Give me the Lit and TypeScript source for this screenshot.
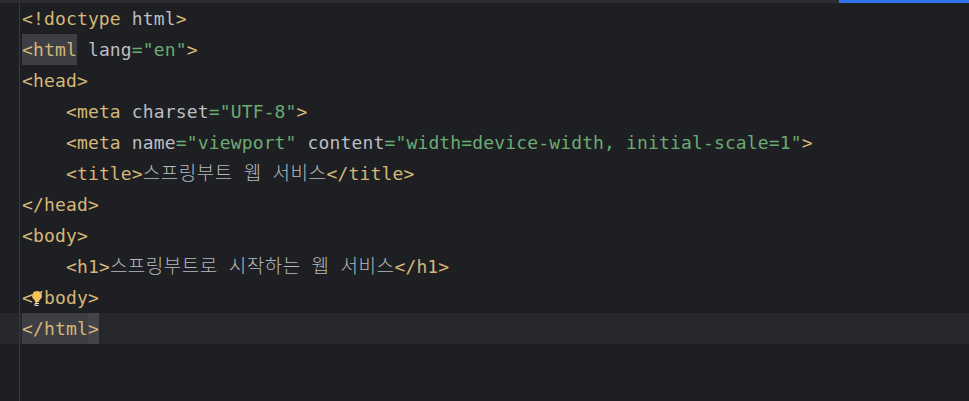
import { LitElement, html, css } from "lit";
import { customElement } from "lit/decorators.js";

@customElement("app-root")
export class AppRoot extends LitElement {
  static styles = css`
    :host { display: block; width: 969px; height: 401px; background: #1e1f22; overflow: hidden; font-family: "DejaVu Sans Mono", "Noto Sans CJK KR", monospace; font-size: 18px; letter-spacing: 0.145px; color: #bcbec4; }
    .top { height: 3px; display: flex; background: #2b2d30; }
    .top .fill { flex: 1; }
    .top .blue { width: 130px; background: #3574f0; }
    .editor { display: flex; height: 398px; position: relative; }
    .gutter { width: 19px; border-right: 1px solid #393b40; margin-right: 2px; flex: none; }
    .code { flex: 1; }
    .line { height: 31px; line-height: 31px; white-space: pre; position: relative; }
    .t { color: #d5b778; }
    .s { color: #6aab73; }
    .k { color: #b6b8be; font-size: 19px; font-weight: 300; letter-spacing: 0.5px; word-spacing: -1px; }
    .hl { background: #3d3f44; display: inline-block; height: 31px; vertical-align: top; }
    .hl2 { background: #43454a; display: inline-block; height: 31px; vertical-align: top; }
    .wrap { position: relative; }
    .caret { position: absolute; top: 310px; left: 0; right: 0; height: 31px; background: #26282e; }
    .bulb { position: absolute; left: 9px; top: 8px; width: 12px; height: 17px; }
  `;
  render() {
    return html`
      <div class="top"><div class="fill"></div><div class="blue"></div></div>
      <div class="wrap">
        <div class="caret"></div>
        <div class="editor">
          <div class="gutter"></div>
          <div class="code">
            <div class="line"><span class="t">&lt;!doctype</span> html<span class="t">&gt;</span></div>
            <div class="line"><span class="hl"><span class="t">&lt;html</span></span> lang<span class="s">="en"</span><span class="t">&gt;</span></div>
            <div class="line"><span class="t">&lt;head&gt;</span></div>
            <div class="line">    <span class="t">&lt;meta</span> charset<span class="s">="UTF-8"</span><span class="t">&gt;</span></div>
            <div class="line">    <span class="t">&lt;meta</span> name<span class="s">="viewport"</span> content<span class="s">="width=device-width, initial-scale=1"</span><span class="t">&gt;</span></div>
            <div class="line">    <span class="t">&lt;title&gt;</span><span class="k">스프링부트 웹 서비스</span><span class="t">&lt;/title&gt;</span></div>
            <div class="line"><span class="t">&lt;/head&gt;</span></div>
            <div class="line"><span class="t">&lt;body&gt;</span></div>
            <div class="line">    <span class="t">&lt;h1&gt;</span><span class="k">스프링부트로 시작하는 웹 서비스</span><span class="t">&lt;/h1&gt;</span></div>
            <div class="line"><span class="t">&lt;/body&gt;</span><svg class="bulb" viewBox="0 0 12 17" aria-hidden="true"><path d="M6 1a4.8 4.8 0 0 0-3 8.6c.7.6.9 1.4.9 2.4h4.2c0-1 .2-1.8.9-2.4A4.8 4.8 0 0 0 6 1z" fill="#f2c55c"/><path d="M4 13.5h4M4.5 15.5h3" stroke="#dfe1e5" stroke-width="1.2"/></svg></div>
            <div class="line"><span class="hl"><span class="t">&lt;/html</span></span><span class="hl2"><span class="t">&gt;</span></span></div>
          </div>
        </div>
      </div>
    `;
  }
}
